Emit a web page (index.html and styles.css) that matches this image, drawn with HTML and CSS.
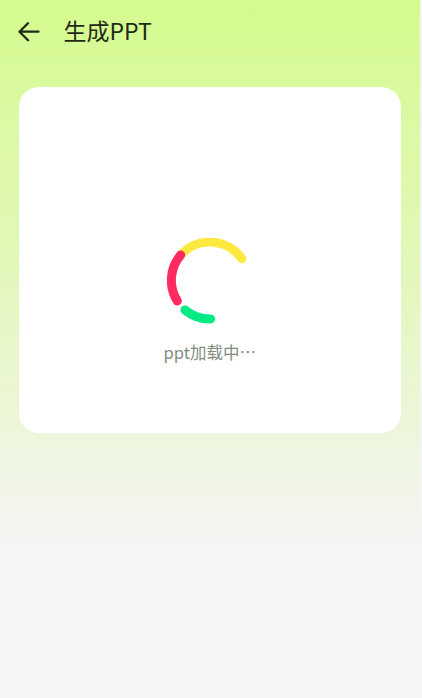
FILE: index.html
```html
<!DOCTYPE html>
<html lang="zh">
<head>
<meta charset="utf-8">
<title>生成PPT</title>
<link rel="stylesheet" href="styles.css">
</head>
<body>
<main class="page">
  <header class="bar">
    <svg class="back" width="23" height="20" viewBox="0 0 23 20" fill="none" stroke="#1f2a14" stroke-width="2.3" stroke-linecap="round" stroke-linejoin="round"><path d="M20.5 9.7H1.5M10 1.2 1.5 9.7l8.5 8.5"/></svg>
    <h1 class="title">生成PPT</h1>
  </header>
  <section class="card">
    <svg class="spinner" width="86" height="86" viewBox="0 0 86 86" fill="none" stroke-width="9" stroke-linecap="round">
      <path stroke="#ffe93f" d="M13.7 17 A39 39 0 0 1 74.7 20.7"/>
      <path stroke="#ff2a60" d="M13.7 17 A39 39 0 0 0 10.3 63"/>
      <path stroke="#00ea85" d="M18 72 A39 39 0 0 0 43.7 81"/>
    </svg>
    <p class="label">ppt加载中…</p>
  </section>
</main>
</body>
</html>
```
FILE: styles.css
```css
html, body {
  margin: 0;
  height: 100%;
  background: #f5f5f5;
}
.page {
  box-sizing: border-box;
  width: 420px;
  height: 698px;
  padding: 0 19px 0 18.5px;
  background: linear-gradient(180deg, #d4fb8e 0, #e4f7c0 300px, #f5f5f5 550px);
  font-family: "Noto Sans CJK SC", "Noto Sans", sans-serif;
}
.bar {
  display: flex;
  align-items: center;
  height: 64px;
  margin-bottom: 23px;
}
.back {
  flex: none;
  margin-left: -1px;
}
.title {
  margin: -4px 0 0 23px;
  font-size: 23px;
  font-weight: 400;
  line-height: 30px;
  color: #1f2a14;
}
.card {
  box-sizing: border-box;
  display: flex;
  flex-direction: column;
  align-items: center;
  width: 382.5px;
  height: 346px;
  padding-top: 151px;
  background: #fff;
  border-radius: 20px;
}
.spinner {
  display: block;
}
.label {
  margin: 16px 0 0;
  font-size: 16.5px;
  line-height: 24px;
  color: #828c7f;
}
```
